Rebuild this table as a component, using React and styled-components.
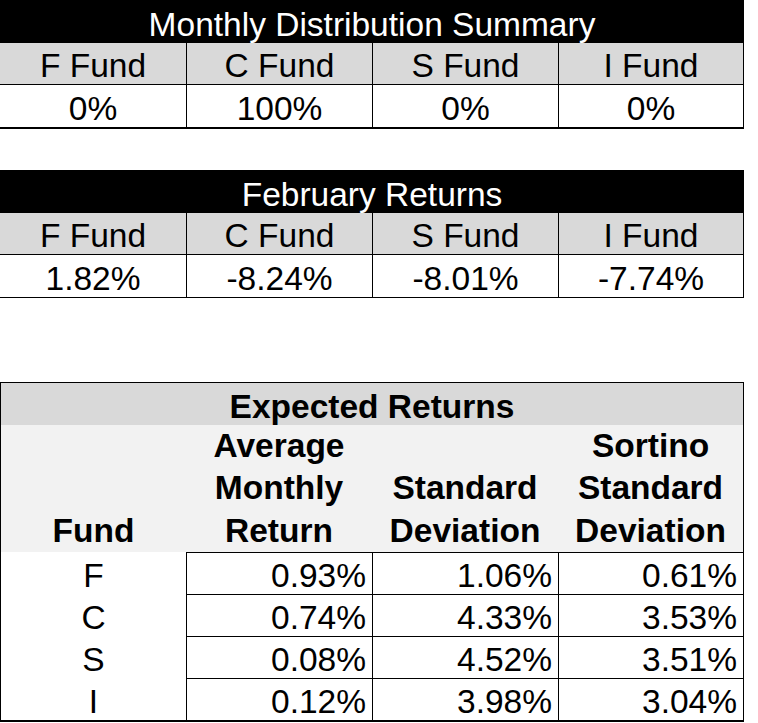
import React from "react";
import styled, { createGlobalStyle } from "styled-components";

const distribution = [
  { fund: "F Fund", value: "0%" },
  { fund: "C Fund", value: "100%" },
  { fund: "S Fund", value: "0%" },
  { fund: "I Fund", value: "0%" }
];

const februaryReturns = [
  { fund: "F Fund", value: "1.82%" },
  { fund: "C Fund", value: "-8.24%" },
  { fund: "S Fund", value: "-8.01%" },
  { fund: "I Fund", value: "-7.74%" }
];

const expected = [
  { fund: "F", avg: "0.93%", std: "1.06%", sortino: "0.61%" },
  { fund: "C", avg: "0.74%", std: "4.33%", sortino: "3.53%" },
  { fund: "S", avg: "0.08%", std: "4.52%", sortino: "3.51%" },
  { fund: "I", avg: "0.12%", std: "3.98%", sortino: "3.04%" }
];

const SummaryTable = ({ title, rows, bottom }) => (
  <Grid>
    <TitleBar>{title}</TitleBar>
    {rows.map(r => (
      <HeadCell key={r.fund}>{r.fund}</HeadCell>
    ))}
    {rows.map(r => (
      <ValueCell key={r.fund} bottom={bottom}>
        {r.value}
      </ValueCell>
    ))}
  </Grid>
);

const App = () => (
  <>
    <GlobalStyle />
    <Sheet>
      <SummaryTable
        title="Monthly Distribution Summary"
        rows={distribution}
        bottom={2}
      />
      <Spacer size={41} />
      <SummaryTable title="February Returns" rows={februaryReturns} bottom={1} />
      <Spacer size={84} />
      <Expected>
        <ExpectedTitle>Expected Returns</ExpectedTitle>
        <SubHead>Fund</SubHead>
        <SubHead>
          Average
          <br />
          Monthly
          <br />
          Return
        </SubHead>
        <SubHead>
          Standard
          <br />
          Deviation
        </SubHead>
        <SubHead>
          Sortino
          <br />
          Standard
          <br />
          Deviation
        </SubHead>
        {expected.map(r => (
          <React.Fragment key={r.fund}>
            <FundName>{r.fund}</FundName>
            <Number>{r.avg}</Number>
            <Number>{r.std}</Number>
            <Number>{r.sortino}</Number>
          </React.Fragment>
        ))}
      </Expected>
    </Sheet>
  </>
);

export default App;

const GlobalStyle = createGlobalStyle`
  body {
    margin: 0;
    background: #ffffff;
    font-family: "Liberation Sans", Arial, sans-serif;
    color: #000000;
  }
`;

const Sheet = styled.div`
  width: 744px;
  display: flex;
  flex-direction: column;
  font-size: 33.5px;
  line-height: 1.08;
`;

const Spacer = styled.div`
  height: ${p => p.size}px;
  flex: none;
`;

const Grid = styled.div`
  display: grid;
  grid-template-columns: 187px 186px 186px 185px;
`;

const TitleBar = styled.div`
  grid-column: 1 / -1;
  height: 43px;
  background: #000000;
  color: #ffffff;
  display: flex;
  align-items: flex-end;
  justify-content: center;
  white-space: nowrap;
`;

const HeadCell = styled.div`
  box-sizing: border-box;
  height: 42px;
  background: #d9d9d9;
  border-right: 1px solid #000000;
  border-bottom: 1px solid #000000;
  display: flex;
  align-items: flex-end;
  justify-content: center;
  white-space: nowrap;
`;

const ValueCell = styled.div`
  box-sizing: border-box;
  height: ${p => 42 + p.bottom}px;
  background: #ffffff;
  border-right: 1px solid #000000;
  border-bottom: ${p => p.bottom}px solid #000000;
  display: flex;
  align-items: flex-end;
  justify-content: center;
  white-space: nowrap;
`;

const Expected = styled.div`
  box-sizing: border-box;
  width: 744px;
  display: grid;
  grid-template-columns: 185px 186px 186px 185px;
  border: 1px solid #000000;
  border-bottom-width: 2px;
`;

const ExpectedTitle = styled.div`
  grid-column: 1 / -1;
  height: 42px;
  background: #d9d9d9;
  font-weight: bold;
  display: flex;
  align-items: flex-end;
  justify-content: center;
  white-space: nowrap;
`;

const SubHead = styled.div`
  height: 127px;
  background: #f2f2f2;
  font-weight: bold;
  line-height: 42.5px;
  display: flex;
  align-items: flex-end;
  justify-content: center;
  text-align: center;
  white-space: nowrap;
`;

const FundName = styled.div`
  height: 42px;
  display: flex;
  align-items: flex-end;
  justify-content: center;
`;

const Number = styled.div`
  box-sizing: border-box;
  height: 42px;
  padding-right: 6px;
  border-left: 1px solid #000000;
  border-top: 1px solid #000000;
  display: flex;
  align-items: flex-end;
  justify-content: flex-end;
  white-space: nowrap;
`;
